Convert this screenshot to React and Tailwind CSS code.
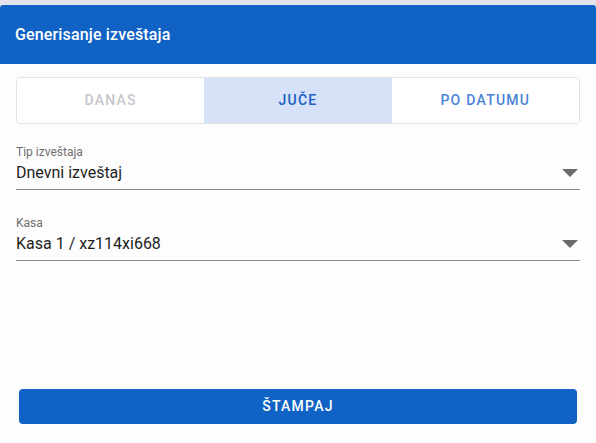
import { useState } from 'react'

// Report generation panel: period tabs, two select fields and a print button

const periods = [
  { id: 'danas', label: 'DANAS' },
  { id: 'juce', label: 'JUČE' },
  { id: 'datum', label: 'PO DATUMU' },
]

function SelectField({ label, value }) {
  return (
    <div className="border-b border-[#8c8c8c] pb-[5px]">
      <div className="text-[12px] leading-[14px] text-[#6e6e6e]">{label}</div>
      <div className="flex items-center justify-between mt-[3px]">
        <span className="text-[16px] leading-[22px] text-[#1f1f1f]">{value}</span>
        <svg width="16" height="8" viewBox="0 0 16 8" className="mr-[2px]">
          <path d="M0 0h16L8 8z" fill="#6b6b6b" />
        </svg>
      </div>
    </div>
  )
}

export default function App() {
  const [period, setPeriod] = useState('juce')

  const tabClass = (id) => {
    if (id === period) return 'bg-[#d6e2f7] text-[#1a5fc4]'
    if (id === 'danas') return 'bg-white text-[#c6c6cb]'
    return 'bg-white text-[#4a84d6]'
  }

  return (
    <div className="w-[596px] h-[443px] bg-[#e4e4ec] pt-[5px] font-['Roboto',sans-serif]">
      <div className="h-[438px] bg-[#fdfdfd] rounded-t-[3px] flex flex-col">
        <header className="h-[59px] bg-[#1062c4] rounded-t-[3px] flex items-center px-[15px]">
          <h1 className="text-white text-[16px] font-medium tracking-[0.15px]">Generisanje izveštaja</h1>
        </header>

        <div className="px-[16px] pt-[13px]">
          <div className="grid grid-cols-3 h-[47px] border border-[#e2e2e2] rounded-[4px] overflow-hidden">
            {periods.map((p) => (
              <button
                key={p.id}
                onClick={() => setPeriod(p.id)}
                className={`text-[14px] font-medium tracking-[1.25px] ${tabClass(p.id)}`}
              >
                {p.label}
              </button>
            ))}
          </div>

          <div className="mt-[21px]">
            <SelectField label="Tip izveštaja" value="Dnevni izveštaj" />
          </div>
          <div className="mt-[26px]">
            <SelectField label="Kasa" value="Kasa 1 / xz114xi668" />
          </div>
        </div>

        <div className="mt-auto px-[19px] pb-[19px]">
          <button className="w-full h-[35px] bg-[#1062c4] rounded-[4px] text-white text-[14px] font-medium tracking-[1.25px]">
            ŠTAMPAJ
          </button>
        </div>
      </div>
    </div>
  )
}
